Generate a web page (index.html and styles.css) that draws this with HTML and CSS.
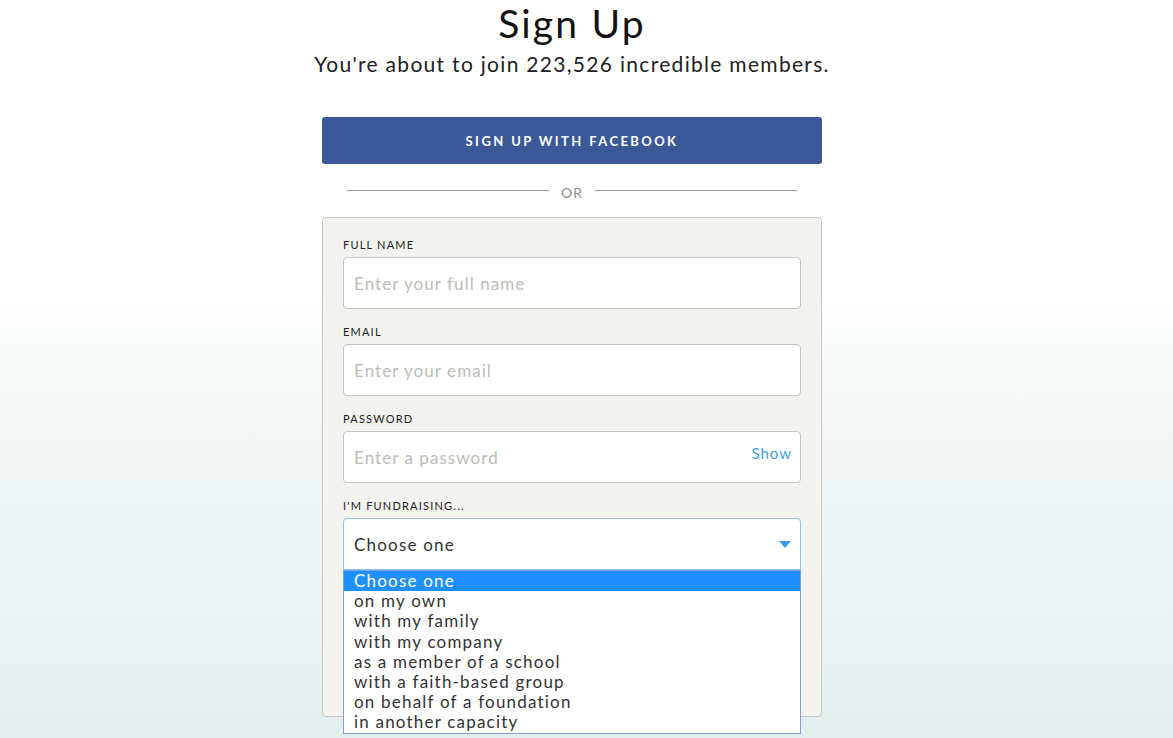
FILE: index.html
```html
<!DOCTYPE html>
<html lang="en">
<head>
    <meta charset="UTF-8">
    <meta name="viewport" content="width=device-width, initial-scale=1.0">
    <title>Sign Up</title>
    <link rel="stylesheet" href="styles.css">
</head>
<body>
    <div id="signup">
        <h1>Sign Up</h1>
        <p class="subtitle">You're about to join 223,526 incredible members.</p>

        <button class="fb-btn">SIGN UP WITH FACEBOOK</button>

        <div class="divider">
            <span class="line"></span>
            <span class="or">OR</span>
            <span class="line"></span>
        </div>

        <form class="signup-form">
            <div class="field">
                <label for="fullName">FULL NAME</label>
                <input type="text" id="fullName" placeholder="Enter your full name">
            </div>

            <div class="field">
                <label for="email">EMAIL</label>
                <input type="text" id="email" placeholder="Enter your email">
            </div>

            <div class="field">
                <label for="password">PASSWORD</label>
                <div class="password-wrap">
                    <input type="password" id="password" placeholder="Enter a password">
                    <span class="show-toggle">Show</span>
                </div>
            </div>

            <div class="field">
                <label>I'M FUNDRAISING...</label>
                <div class="select-wrap">
                    <div class="select-box">
                        <span>Choose one</span>
                        <svg class="caret" width="12" height="8" viewBox="0 0 12 8"><path d="M0 0h12L6 7z" fill="#3d9be9"/></svg>
                    </div>
                    <ul class="options">
                        <li class="selected">Choose one</li>
                        <li>on my own</li>
                        <li>with my family</li>
                        <li>with my company</li>
                        <li>as a member of a school</li>
                        <li>with a faith-based group</li>
                        <li>on behalf of a foundation</li>
                        <li>in another capacity</li>
                    </ul>
                </div>
            </div>

            <button type="button" class="submit-btn">CREATE ACCOUNT</button>
        </form>
    </div>
</body>
</html>
```

FILE: styles.css
```css
* {
    box-sizing: border-box;
    margin: 0;
    padding: 0;
    font-family: 'Lato', 'Open Sans', sans-serif;
}

html, body {
    height: 100%;
}

body {
    background: linear-gradient(180deg, #ffffff 0%, #ffffff 40%, #f3f8f7 55%, #eaf2f1 85%, #e2eeee 100%);
    overflow: hidden;
    padding-right: 29px;
}

#signup {
    width: 500px;
    margin: 0 auto;
}

h1 {
    text-align: center;
    font-size: 39px;
    font-weight: 400;
    color: #111;
    line-height: 47px;
    letter-spacing: 2.2px;
}

.subtitle {
    text-align: center;
    font-size: 21px;
    color: #222;
    margin: -3px -40px 0;
    line-height: 40px;
    letter-spacing: 1.3px;
    white-space: nowrap;
}

.fb-btn {
    display: block;
    width: 100%;
    height: 47px;
    margin-top: 33px;
    background: #3b5998;
    color: #fff;
    border: none;
    border-radius: 3px;
    font-size: 13px;
    font-weight: 700;
    letter-spacing: 2.4px;
}

.divider {
    display: flex;
    align-items: center;
    gap: 10px;
    padding: 0 25px;
    height: 53px;
}

.divider .line {
    flex: 1;
    height: 1px;
    background: #9b9b95;
}

.divider .or {
    color: #8f8f8a;
    font-size: 14px;
    padding: 0 2px;
    margin-top: 3px;
    letter-spacing: 1px;
}

.signup-form {
    background: #f3f3ef;
    border: 1px solid #c9c9c1;
    border-radius: 4px;
    padding: 20px 20px 0;
    height: 500px;
}

.field {
    margin-bottom: 16px;
}

label {
    display: block;
    font-size: 11px;
    line-height: 14px;
    color: #222;
    margin-bottom: 5px;
    letter-spacing: 1.2px;
}

input[type="text"], input[type="password"] {
    display: block;
    width: 100%;
    height: 52px;
    padding: 0 10px;
    border: 1px solid #c6c6be;
    border-radius: 4px;
    background: #fff;
    font-size: 17px;
    color: #333;
    letter-spacing: 1.05px;
}

input::placeholder {
    color: #bcbcb6;
}

.password-wrap {
    position: relative;
}

.show-toggle {
    position: absolute;
    right: 9px;
    top: 13px;
    color: #3fa0e6;
    font-size: 15px;
    letter-spacing: 1px;
}

.select-wrap {
    position: relative;
}

.select-box {
    display: flex;
    align-items: center;
    justify-content: space-between;
    height: 52px;
    padding: 0 9px 0 10px;
    border: 1px solid #8cc3f1;
    border-radius: 4px 4px 0 0;
    background: #fff;
    font-size: 17px;
    color: #333;
    letter-spacing: 1.2px;
}

.caret {
    margin-top: 2px;
}

.options {
    position: absolute;
    left: 0;
    right: 0;
    top: 52px;
    list-style: none;
    background: #fff;
    border: 1px solid #7f9fd6;
    z-index: 2;
}

.options li {
    height: 20.2px;
    line-height: 19px;
    padding: 0 10px;
    font-size: 17px;
    color: #333;
    letter-spacing: 1.2px;
}

.options li.selected {
    background: #1e90ff;
    color: #fff;
}

.submit-btn {
    display: block;
    width: 100%;
    height: 50px;
    margin-top: 24px;
    background: #02a95c;
    color: #fff;
    border: none;
    border-radius: 3px;
    font-size: 13px;
    font-weight: 700;
}
```
